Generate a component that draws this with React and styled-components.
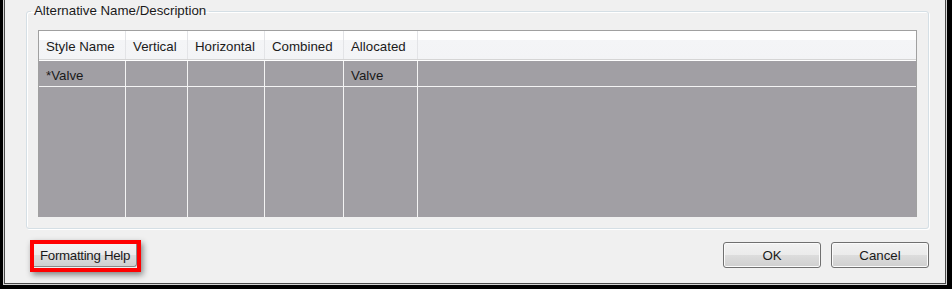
import React from "react";
import styled, { createGlobalStyle } from "styled-components";

const Global = createGlobalStyle`
  html, body { margin: 0; padding: 0; background: #f0f0f0; }
  * { box-sizing: border-box; }
`;

const FONT = `"Liberation Sans", Arial, sans-serif`;

const Frame = styled.div`
  width: 952px;
  height: 289px;
  border-left: 3px solid #000;
  border-right: 5px solid #000;
  border-bottom: 4px solid #000;
  font-family: ${FONT};
  font-size: 13.3px;
  color: #1a1a1a;
`;

const Mid = styled.div`
  height: 100%;
  border-left: 1px solid #d4d4d4;
  border-right: 1px solid #d4d4d4;
  border-bottom: 1px solid #d4d4d4;
`;

const Inner = styled.div`
  height: 100%;
  background: #f0f0f0;
  border-left: 1px solid #4a4a4a;
  border-right: 1px solid #4a4a4a;
  border-bottom: 1px solid #4a4a4a;
  display: flex;
  flex-direction: column;
`;

const Group = styled.fieldset`
  margin: 0 16px 0 21px;
  padding: 8px 11px 11px 4px;
  min-width: 0;
  border: 1px solid #d5dfe5;
  border-radius: 3px;
  box-shadow: inset 1px 1px 0 #fff, 1px 1px 0 #fff;
`;

const Legend = styled.legend`
  padding: 0 3px;
  line-height: 22px;
  height: 22px;
`;

const Table = styled.div`
  margin-left: 7px;
  height: 187px;
  border: 1px solid #a0a0a0;
  border-bottom: none;
  display: flex;
  flex-direction: column;
  background: #a19fa4;
`;

const Cols = styled.div`
  display: grid;
  grid-template-columns: 87px 62px 77px 79px 74px 1fr;
`;

const Header = styled(Cols)`
  height: 29px;
  background: linear-gradient(#ffffff 0, #ffffff 9px, #f4f5f7 9px, #f3f4f6 100%);
  border-bottom: 1px solid #d5d5d5;
`;

const HeadCell = styled.div`
  padding-left: 7px;
  display: flex;
  align-items: center;
  padding-top: 2px;
  white-space: nowrap;
  border-right: ${(p) => (p.$last ? "none" : "1px solid #e3e4e7")};
`;

const Body = styled.div`
  flex: 1;
  border-top: 1px solid #fff;
  display: flex;
  flex-direction: column;
`;

const Row = styled(Cols)`
  height: 26px;
  border-bottom: 1px solid #f4f4f4;
`;

const Filler = styled(Cols)`
  flex: 1;
`;

const Cell = styled.div`
  padding-left: 7px;
  padding-top: 3px;
  display: flex;
  align-items: center;
  white-space: nowrap;
  border-right: ${(p) => (p.$last ? "none" : "1px solid #f4f4f4")};
`;

const Footer = styled.div`
  display: flex;
  align-items: flex-start;
  padding: 11px 16px 0 25px;
`;

const Highlight = styled.div`
  border: 4px solid #ff0000;
  padding-bottom: 1px;
  box-shadow: 2px 3px 6px rgba(0, 0, 0, 0.45);
  background: #f0f0f0;
`;

const HelpButton = styled.div`
  width: 103px;
  height: 23px;
  padding-left: 6px;
  padding-top: 1px;
  display: flex;
  align-items: center;
  white-space: nowrap;
  letter-spacing: -0.3px;
  border-right: 1px solid #8a8a8a;
  border-bottom: 1px solid #8a8a8a;
  border-bottom-right-radius: 3px;
  background: linear-gradient(#f2f2f2 0%, #ebebeb 50%, #dddddd 50%, #cfcfcf 100%);
`;

const Buttons = styled.div`
  margin-left: auto;
  margin-top: 2px;
  display: flex;
  gap: 10px;
`;

const Button = styled.div`
  width: 98px;
  height: 26px;
  border: 1px solid #707070;
  border-radius: 3px;
  box-shadow: inset 0 0 0 1px #fbfbfb;
  background: linear-gradient(#f2f2f2 0%, #ebebeb 50%, #dddddd 50%, #cfcfcf 100%);
  display: flex;
  align-items: center;
  justify-content: center;
  padding-top: 1px;
`;

const headers = ["Style Name", "Vertical", "Horizontal", "Combined", "Allocated", ""];
const row = ["*Valve", "", "", "", "Valve", ""];

export default function App() {
  return (
    <>
      <Global />
      <Frame>
        <Mid>
          <Inner>
            <Group>
              <Legend>Alternative Name/Description</Legend>
              <Table>
                <Header>
                  {headers.map((h, i) => (
                    <HeadCell key={i} $last={i === headers.length - 1}>
                      {h}
                    </HeadCell>
                  ))}
                </Header>
                <Body>
                  <Row>
                    {row.map((c, i) => (
                      <Cell key={i} $last={i === row.length - 1}>
                        {c}
                      </Cell>
                    ))}
                  </Row>
                  <Filler>
                    {row.map((_, i) => (
                      <Cell key={i} $last={i === row.length - 1} />
                    ))}
                  </Filler>
                </Body>
              </Table>
            </Group>
            <Footer>
              <Highlight>
                <HelpButton>Formatting Help</HelpButton>
              </Highlight>
              <Buttons>
                <Button>OK</Button>
                <Button>Cancel</Button>
              </Buttons>
            </Footer>
          </Inner>
        </Mid>
      </Frame>
    </>
  );
}
